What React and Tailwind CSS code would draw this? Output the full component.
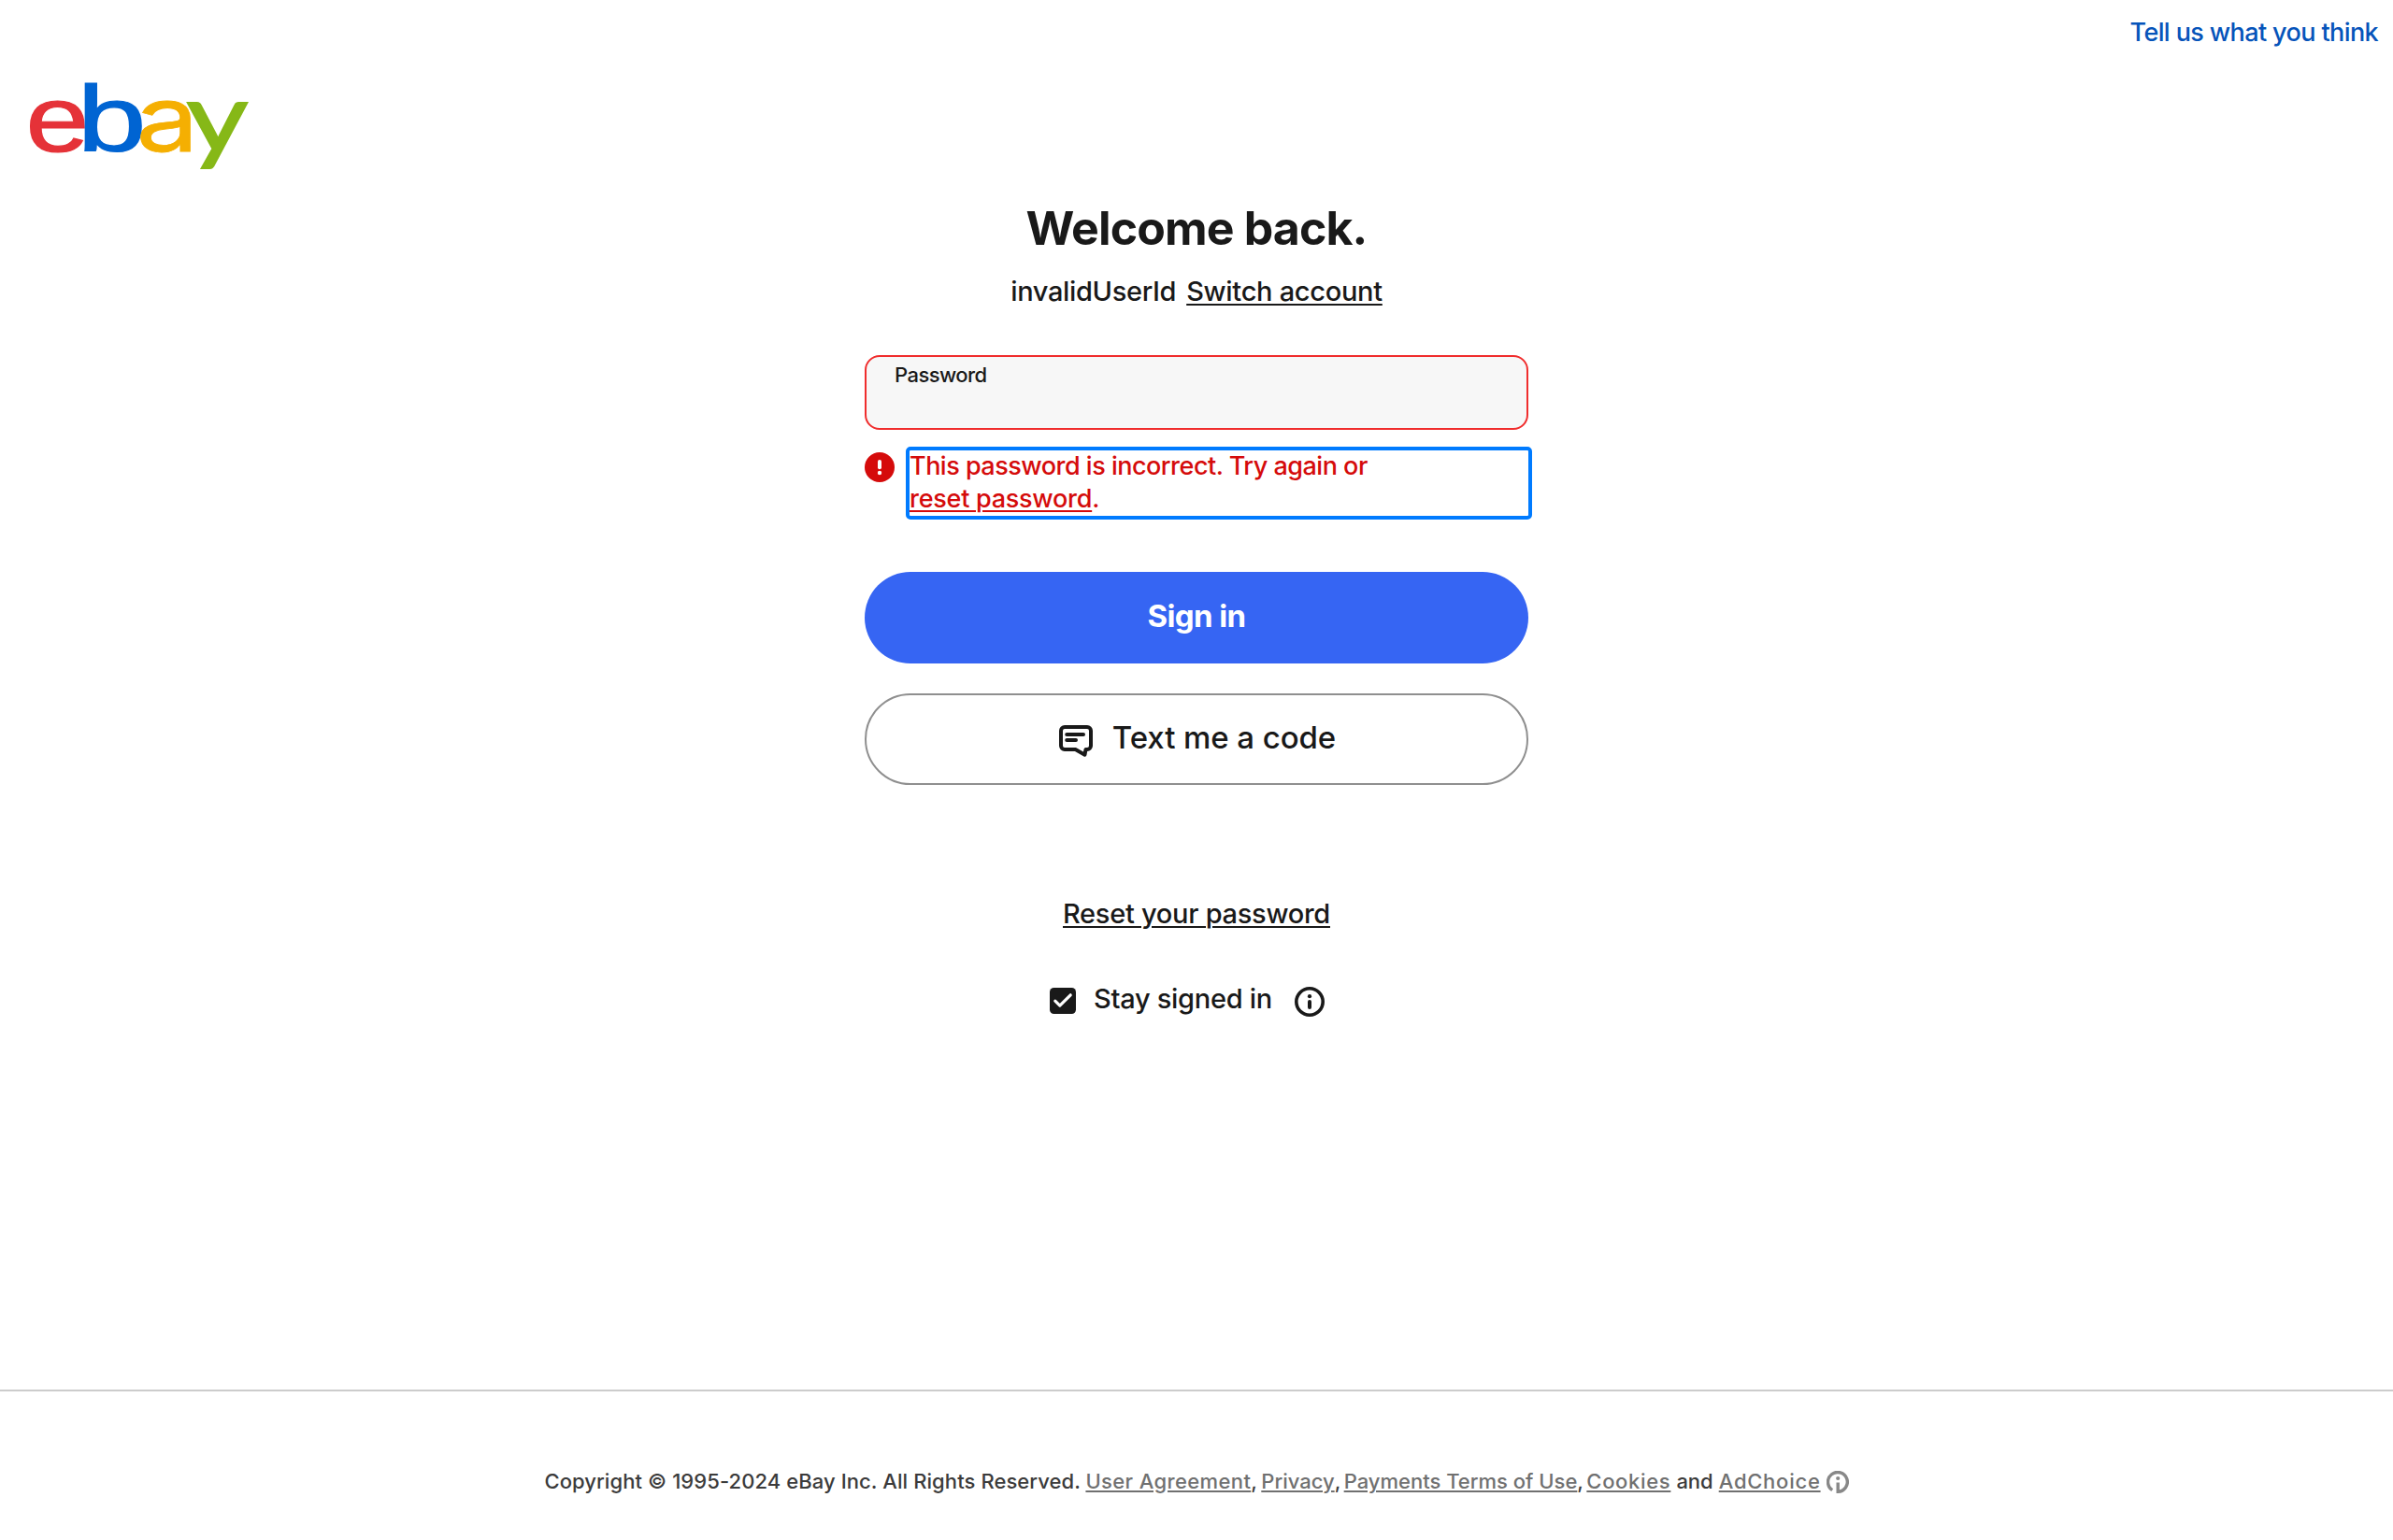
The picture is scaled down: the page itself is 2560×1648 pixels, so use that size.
function Logo() {
  return (
    <svg
      role="img"
      aria-label="eBay"
      className="ml-8 mt-8 block h-[94px] w-[236px] overflow-visible"
      viewBox="32 87 236 94"
    >
      <g fontSize="101" fontFamily="'Liberation Sans', sans-serif" strokeWidth="1.2">
        <text transform="translate(27.4 162.2) scale(1.21 1)" fill="#e53238" stroke="#e53238">e</text>
        <text transform="translate(82.4 161.8) scale(1.32 1)" fill="#0064d2" stroke="#0064d2">b</text>
      </g>
      <text
        transform="translate(145.4 161.6) scale(1.23 1)"
        fontSize="97"
        fontFamily="Inter, sans-serif"
        fontWeight="400"
        fill="#f5af02"
        stroke="#f5af02"
        strokeWidth="0.8"
      >
        a
      </text>
      <text
        transform="translate(199.6 161.5) scale(1.24 1)"
        fontSize="103"
        fontFamily="Lato, sans-serif"
        fontWeight="400"
        fill="#86b817"
        stroke="#86b817"
        strokeWidth="1.8"
      >
        y
      </text>
    </svg>
  );
}

function ErrorIcon() {
  return (
    <svg className="mt-0.5 h-8 w-8 shrink-0" viewBox="0 0 32 32">
      <circle cx="16" cy="16" r="16" fill="#d50b0b" />
      <path d="M16 9.9v6.4" stroke="#fff" strokeWidth="4" strokeLinecap="round" />
      <circle cx="16" cy="22" r="2.2" fill="#fff" />
    </svg>
  );
}

function MessageIcon() {
  return (
    <svg className="mt-1.5 h-[34px] w-9 shrink-0" viewBox="0 0 36 34" fill="none" stroke="#191919" strokeWidth="4" strokeLinecap="round" strokeLinejoin="round">
      <path d="M6 2H30A4 4 0 0 1 34 6V22A4 4 0 0 1 30 26H28.5L27.5 31.7L17.5 26H6A4 4 0 0 1 2 22V6A4 4 0 0 1 6 2Z" />
      <path d="M8.2 10H26M8.2 16H18" />
    </svg>
  );
}

function InfoIcon() {
  return (
    <svg className="ml-6 mt-1.5 h-8 w-8 shrink-0" viewBox="0 0 32 32">
      <circle cx="16" cy="16" r="14.2" fill="none" stroke="#191919" strokeWidth="3.6" />
      <circle cx="16" cy="10.2" r="2.1" fill="#191919" />
      <path d="M16 16v6" stroke="#191919" strokeWidth="4" strokeLinecap="round" />
    </svg>
  );
}

function Checkbox() {
  return (
    <svg className="mt-1 h-7 w-7 shrink-0" viewBox="0 0 28 28">
      <rect width="28" height="28" rx="4.5" fill="#191919" />
      <path d="M5.8 14.2l5 4.9L22.2 7.8" fill="none" stroke="#fff" strokeWidth="3.2" strokeLinecap="round" strokeLinejoin="round" />
    </svg>
  );
}

function AdChoiceIcon() {
  return (
    <svg className="mt-0.5 h-6 w-6 shrink-0" viewBox="0 0 24 24">
      <path d="M6.2 20.6A10.4 10.4 0 1 1 12.2 22.3V12.6" fill="none" stroke="#888" strokeWidth="3.4" />
      <circle cx="12.2" cy="8" r="2.1" fill="#888" />
    </svg>
  );
}

const link = "underline decoration-2 underline-offset-[3px]";
const footLink = "text-[#707070] underline decoration-2 underline-offset-2";

export default function App() {
  return (
    <div className="flex h-[1648px] w-full flex-col bg-white font-['Inter',sans-serif] font-medium text-[#191919]">
      <header className="flex flex-col pt-[15px]">
        <a className="mr-4 self-end text-[27px] leading-10 tracking-[-0.608px] text-[#0654ba]">
          Tell us what you think
        </a>
        <Logo />
      </header>

      <main className="mx-auto flex w-[710px] flex-1 flex-col items-center pt-[33px]">
        <h1 className="text-[50px] font-bold leading-[60px] tracking-[-0.877px]">Welcome back.</h1>

        <div className="mt-[18px] flex gap-[11px] whitespace-nowrap text-[29px] leading-10">
          <span className="tracking-[-0.34px]">invalidUserId</span>
          <a className={`tracking-[-0.3px] ${link}`}>Switch account</a>
        </div>

        <div className="mt-12 h-20 w-full rounded-2xl border-2 border-[#f02d2d] bg-[#f7f7f7] pl-[30px] pt-1">
          <label className="block text-[22px] leading-[30px] tracking-[-0.55px]">Password</label>
        </div>

        <div className="mt-[22px] flex w-full gap-4 text-[#d50b0b]">
          <ErrorIcon />
          <div className="flex h-[70px] flex-1 rounded-[1px] text-[27px] leading-[35px] outline-4 outline-[#007bff]">
            <p className="-mt-px whitespace-nowrap tracking-[-0.5px]">
              This password is incorrect. Try again or
              <br />
              <a className={`tracking-[-0.26px] ${link}`}>reset password</a>.
            </p>
          </div>
        </div>

        <button className="mt-[60px] flex h-[98px] w-full items-center justify-center rounded-full bg-[#3665f3] pb-0.5 text-[33px] font-bold tracking-[-0.617px] text-white">
          Sign in
        </button>

        <button className="mt-8 flex h-[98px] w-full items-center justify-center gap-[21px] rounded-full border-2 border-[#8f8f8f] pb-0.5 pl-0.5 text-[33px] font-medium tracking-[-0.08px]">
          <MessageIcon />
          <span>Text me a code</span>
        </button>

        <a className={`mt-[118px] text-[29px] leading-10 tracking-[-0.28px] ${link}`}>Reset your password</a>

        <div className="mr-5 mt-[51px] flex items-center text-[29px] leading-10">
          <Checkbox />
          <span className="ml-[19px] tracking-[-0.3px]">Stay signed in</span>
          <InfoIcon />
        </div>
      </main>

      <footer className="flex h-[161px] justify-center border-t-2 border-[#ccc] pt-[81px] text-[22px] leading-[30px] text-[#3b3b3b]">
        <div className="flex h-[30px] items-center whitespace-nowrap">
          <span className="w-[579px] tracking-[0.08px]">Copyright © 1995-2024 eBay Inc. All Rights Reserved.</span>
          <a className={`tracking-[0.375px] ${footLink}`}>User Agreement</a>
          <span className="w-[11px]">,</span>
          <a className={footLink}>Privacy</a>
          <span className="w-2.5">,</span>
          <a className={footLink}>Payments Terms of Use</a>
          <span className="w-2.5">,</span>
          <a className={`tracking-[0.67px] ${footLink}`}>Cookies</a>
          <span className="mx-1.5">and</span>
          <a className={`mr-1.5 tracking-[0.75px] ${footLink}`}>AdChoice</a>
          <AdChoiceIcon />
        </div>
      </footer>
    </div>
  );
}
